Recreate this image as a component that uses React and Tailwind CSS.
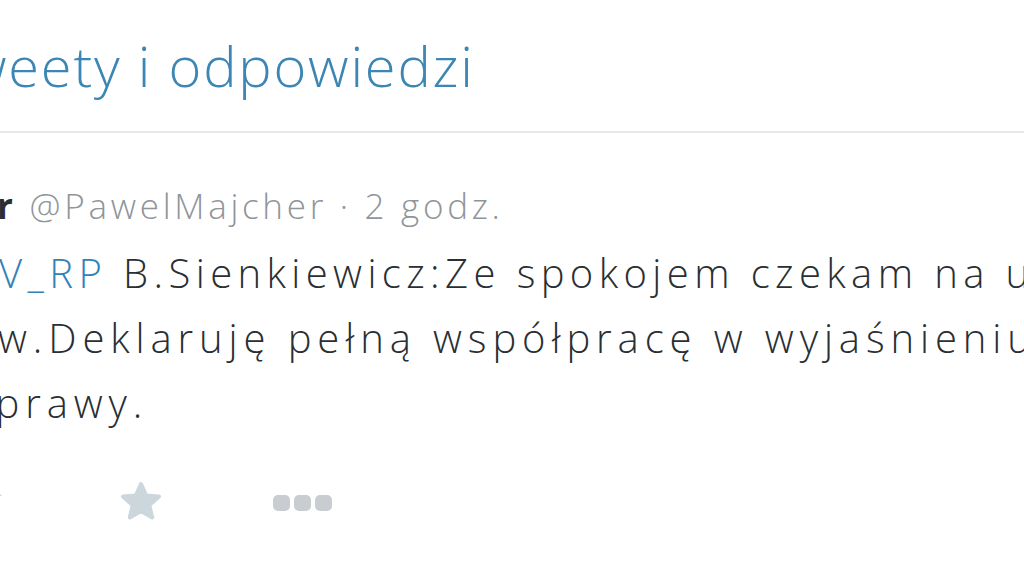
import React from "react";

function Star() {
  return (
    <svg width="42" height="40" viewBox="0 0 42 40">
      <path
        d="M21 3 L26.2 14.5 L39 15.6 L29.3 24.2 L32.2 36.5 L21 30 L9.8 36.5 L12.7 24.2 L3 15.6 L15.8 14.5 Z"
        fill="#ccd6dd"
        stroke="#ccd6dd"
        strokeWidth="4"
        strokeLinejoin="round"
      />
    </svg>
  );
}

function RetweetPart() {
  return (
    <svg width="40" height="30" viewBox="0 0 40 30">
      <path d="M30 3 L37 10 L33 10 L33 24 L20 24 L20 19 L28 19 L28 10 L24 10 Z" fill="#ccd6dd" />
    </svg>
  );
}

export default function App() {
  return (
    <div
      className="w-[1024px] h-[575px] overflow-hidden bg-white"
      style={{ fontFamily: '"Open Sans", "DejaVu Sans", sans-serif' }}
    >
      <div className="pt-[27px] pb-[28px] border-b-2 border-[#e8e8e8] overflow-hidden">
        <div className="text-[56px] leading-[76px] font-light tracking-[1.8px] text-[#3b86b4] whitespace-nowrap ml-[-34px]">
          weety i odpowiedzi
        </div>
      </div>
      <div className="overflow-hidden">
        <div className="mt-[51px] text-[35px] leading-[44px] tracking-[3.7px] whitespace-nowrap flex">
          <span className="font-bold text-[#292f33] ml-[-3px]">r</span>
          <span className="ml-[13px] font-light text-[#8f9599]">@PawelMajcher · 2 godz.</span>
        </div>
        <div className="mt-[12px] text-[40px] leading-[65px] font-light text-[#292f33] whitespace-nowrap">
          <div className="ml-[-1px] tracking-[5.4px]">
            <span className="text-[#3282b8]">V_RP</span> B.Sienkiewicz:Ze spokojem czekam na ustalenia
          </div>
          <div className="ml-[-2px] tracking-[5.9px]">w.Deklaruję pełną współpracę w wyjaśnieniu sprawy</div>
          <div className="ml-[-29px] tracking-[5.9px]">sprawy.</div>
        </div>
        <div className="mt-[46px] h-[40px] flex items-center">
          <div className="ml-[-35px] flex items-center">
            <RetweetPart />
          </div>
          <div className="ml-[115px] flex items-center">
            <Star />
          </div>
          <div className="ml-[111px] flex items-center gap-[4px] mt-[4px]">
            <div className="w-[17px] h-[16px] rounded-[5px] bg-[#c9cdd1]" />
            <div className="w-[17px] h-[16px] rounded-[5px] bg-[#c9cdd1]" />
            <div className="w-[17px] h-[16px] rounded-[5px] bg-[#c9cdd1]" />
          </div>
        </div>
      </div>
    </div>
  );
}
